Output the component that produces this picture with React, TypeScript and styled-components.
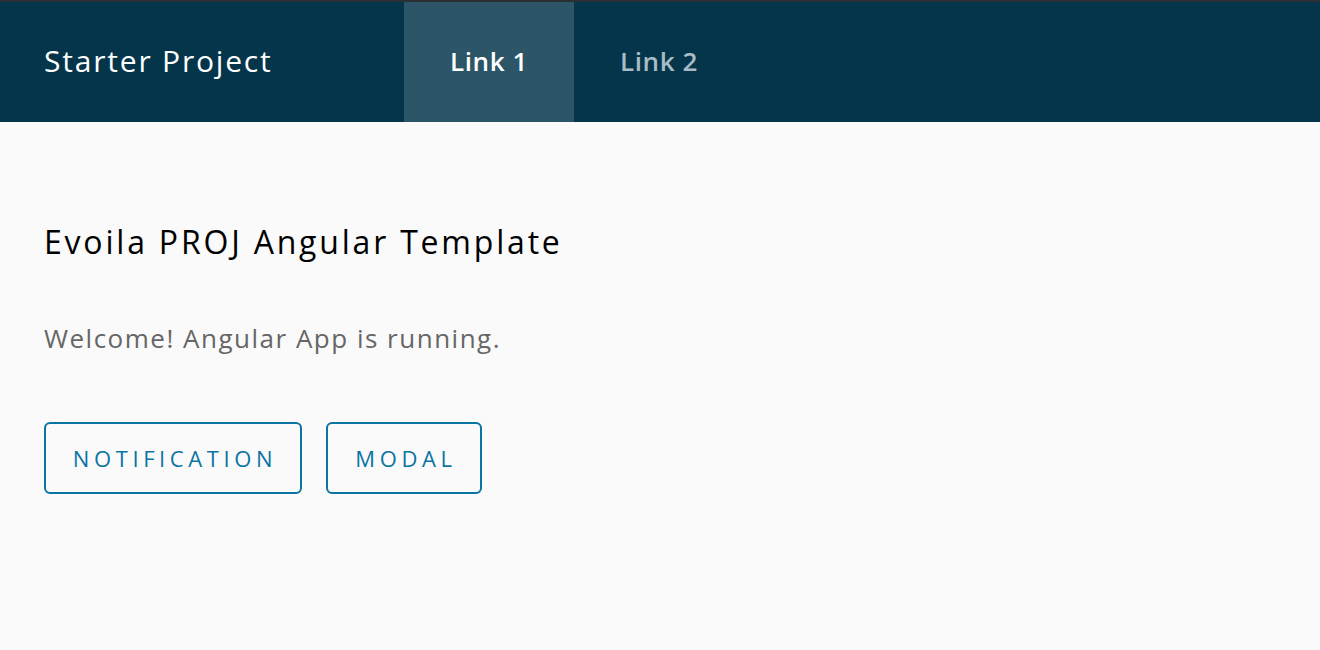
import React from "react";
import styled, { createGlobalStyle } from "styled-components";

const Global = createGlobalStyle`
  html, body { margin: 0; padding: 0; }
  body {
    background: #fafafa;
    font-family: "Open Sans", Lato, sans-serif;
  }
`;

const Page = styled.div`
  min-height: 650px;
  background: #fafafa;
  display: flex;
  flex-direction: column;
`;

const Header = styled.header`
  height: 120px;
  background: #04354b;
  border-top: 2px solid #2b2f33;
  display: flex;
  align-items: stretch;
`;

const Brand = styled.div`
  width: 360px;
  padding: 0 0 3px 44px;
  display: flex;
  align-items: center;
  color: #ffffff;
  font-size: 30px;
  letter-spacing: 1.8px;
`;

const Nav = styled.nav`
  display: flex;
  align-items: stretch;
`;

const NavLink = styled.a<{ $active?: boolean }>`
  width: 170px;
  padding-bottom: 2px;
  display: flex;
  align-items: center;
  justify-content: center;
  font-size: 26px;
  font-weight: 600;
  letter-spacing: 0.6px;
  text-decoration: none;
  color: ${(p) => (p.$active ? "#ffffff" : "#a9bcc6")};
  background: ${(p) => (p.$active ? "#2c5668" : "transparent")};
  cursor: pointer;
`;

const Main = styled.main`
  padding: 96px 44px 0;
  display: flex;
  flex-direction: column;
`;

const Title = styled.h1`
  margin: 0;
  font-size: 32px;
  font-weight: 400;
  color: #000000;
  line-height: 48px;
  letter-spacing: 2.8px;
`;

const Text = styled.p`
  margin: 52px 0 0;
  font-size: 26px;
  color: #666666;
  line-height: 40px;
  letter-spacing: 1.5px;
`;

const Buttons = styled.div`
  display: flex;
  gap: 24px;
  margin-top: 64px;
`;

const Button = styled.button<{ $w: number }>`
  width: ${(p) => p.$w}px;
  height: 72px;
  padding: 0 0 0 4px;
  border: 2px solid #0a74a3;
  border-radius: 6px;
  background: transparent;
  color: #0a74a3;
  font-family: "Open Sans", Lato, sans-serif;
  font-size: 22px;
  font-weight: 500;
  letter-spacing: 4.6px;
  text-transform: uppercase;
  cursor: pointer;
`;

export default function App() {
  return (
    <Page>
      <Global />
      <Header>
        <Brand>Starter Project</Brand>
        <Nav>
          <NavLink $active>Link 1</NavLink>
          <NavLink>Link 2</NavLink>
        </Nav>
      </Header>
      <Main>
        <Title>Evoila PROJ Angular Template</Title>
        <Text>Welcome! Angular App is running.</Text>
        <Buttons>
          <Button $w={258}>Notification</Button>
          <Button $w={156}>Modal</Button>
        </Buttons>
      </Main>
    </Page>
  );
}
